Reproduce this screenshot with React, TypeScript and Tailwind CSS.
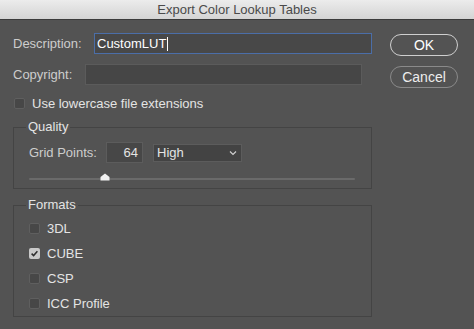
import React from 'react';

const Box: React.FC<{ checked?: boolean }> = ({ checked }) => (
  <span
    className={
      checked
        ? 'flex h-[11px] w-[11px] items-center justify-center rounded-[2px] bg-[#c9c9c9]'
        : 'block h-[11px] w-[11px] rounded-[2px] border border-[#5f5f5f] bg-[#474747]'
    }
  >
    {checked && (
      <svg width="9" height="9" viewBox="0 0 9 9">
        <path d="M1.6 4.6 L3.6 6.6 L7.4 2.2" fill="none" stroke="#2e2e2e" strokeWidth="1.5" />
      </svg>
    )}
  </span>
);

const App: React.FC = () => {
  return (
    <div
      className="h-[329px] w-[474px] overflow-hidden bg-[#535353] text-[13px] text-[#e4e4e4]"
      style={{ fontFamily: '"Liberation Sans", Arial, sans-serif' }}
    >
      <div className="flex h-[20px] items-center justify-center border-b border-[#3b3b3b] bg-gradient-to-b from-[#ececec] to-[#d4d4d4] text-[13px] text-[#4a4a4a]">
        Export Color Lookup Tables
      </div>

      <div className="flex pt-[13px]">
        <div className="ml-[13px] w-[359px]">
          <div className="flex h-[21px] items-center">
            <span className="w-[81px] text-[#cdcdcd]">Description:</span>
            <div className="flex h-[21px] w-[278px] items-center border border-[#4b6ea8] bg-[#484848] pl-[2px] text-white">
              CustomLUT<span className="ml-[1px] h-[14px] w-px bg-white" />
            </div>
          </div>

          <div className="mt-[10px] flex h-[21px] items-center">
            <span className="w-[72px] text-[#cdcdcd]">Copyright:</span>
            <div className="h-[21px] w-[277px] border border-[#5b5b5b] bg-[#464646]" />
          </div>

          <div className="mt-[13px] flex h-[11px] items-center gap-[7px]">
            <span className="ml-[1px]">
              <Box />
            </span>
            <span>Use lowercase file extensions</span>
          </div>

          <fieldset className="mt-[10px] h-[70px] border border-[#444444] pl-[15px] pr-[16px]">
            <legend className="-ml-[3px] px-[2px] leading-[16px]">Quality</legend>
            <div className="mt-[7px] flex h-[21px] items-center">
              <span className="w-[77px] text-[#cdcdcd]">Grid Points:</span>
              <div className="flex h-[21px] w-[37px] items-center justify-end border border-[#5c5c5c] bg-[#474747] pr-[4px]">
                64
              </div>
              <div className="ml-[10px] flex h-[18px] w-[89px] items-center justify-between border border-[#5c5c5c] bg-[#434343] pl-[3px] pr-[4px]">
                <span>High</span>
                <svg width="8" height="6" viewBox="0 0 8 6">
                  <path d="M1 1.5 L4 4.5 L7 1.5" fill="none" stroke="#cfcfcf" strokeWidth="1.2" />
                </svg>
              </div>
            </div>
            <div className="relative mt-[15px] h-[2px] w-[326px] rounded-full bg-[#6a6a6a]">
              <svg className="absolute left-[71px] top-[-5px]" width="10" height="8" viewBox="0 0 10 8">
                <path d="M5 0.5 L9.5 4 L9.5 7.5 L0.5 7.5 L0.5 4 Z" fill="#f2f2f2" />
              </svg>
            </div>
          </fieldset>

          <fieldset className="mt-[8px] h-[120px] border border-[#444444] pl-[15px]">
            <legend className="-ml-[3px] px-[2px] leading-[16px]">Formats</legend>
            <div className="mt-[10px] flex flex-col gap-[14px]">
              {[
                ['3DL', false],
                ['CUBE', true],
                ['CSP', false],
                ['ICC Profile', false],
              ].map(([label, on]) => (
                <div key={label as string} className="flex h-[11px] items-center gap-[7px]">
                  <Box checked={on as boolean} />
                  <span>{label as string}</span>
                </div>
              ))}
            </div>
          </fieldset>
        </div>

        <div className="ml-[18px] flex w-[68px] flex-col gap-[10px] pt-[1px]">
          <button className="flex h-[22px] items-center justify-center rounded-full border border-[#cfcfcf] text-[14px] text-white">
            OK
          </button>
          <button className="flex h-[22px] items-center justify-center rounded-full border border-[#8a8a8a] text-[14px] text-[#ededed]">
            Cancel
          </button>
        </div>
      </div>
    </div>
  );
};

export default App;
